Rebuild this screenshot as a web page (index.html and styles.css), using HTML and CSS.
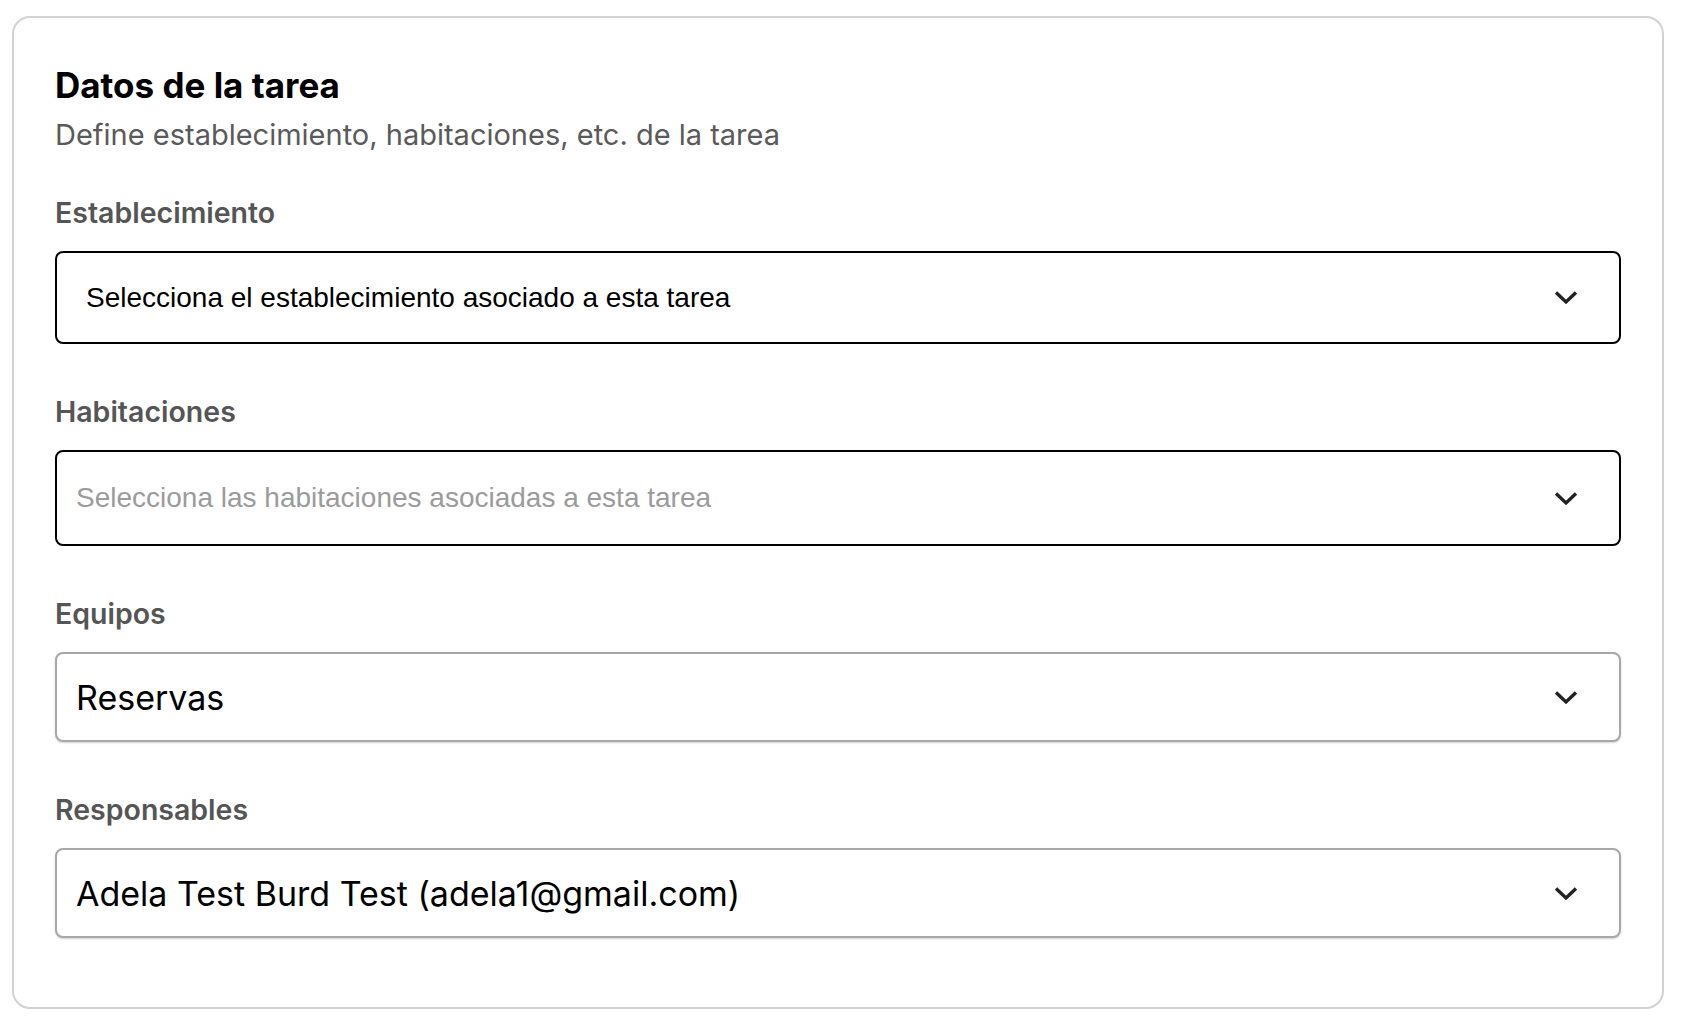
FILE: index.html
```html
<!DOCTYPE html>
<html lang="es">
<head>
<meta charset="utf-8">
<title>Datos de la tarea</title>
<link rel="stylesheet" href="styles.css">
</head>
<body>
<section class="card">
  <h1 class="title">Datos de la tarea</h1>
  <p class="subtitle">Define establecimiento, habitaciones, etc. de la tarea</p>

  <div class="field">
    <div class="label">Establecimiento</div>
    <div class="select select-dark select-est">
      <span class="value-sm">Selecciona el establecimiento asociado a esta tarea</span>
      <svg class="chev" viewBox="0 0 24 15" width="24" height="15"><polyline points="2,2.5 12,12 22,2.5"/></svg>
    </div>
  </div>

  <div class="field">
    <div class="label">Habitaciones</div>
    <div class="select select-dark select-hab">
      <span class="value-sm placeholder">Selecciona las habitaciones asociadas a esta tarea</span>
      <svg class="chev" viewBox="0 0 24 15" width="24" height="15"><polyline points="2,2.5 12,12 22,2.5"/></svg>
    </div>
  </div>

  <div class="field">
    <div class="label">Equipos</div>
    <div class="select select-light">
      <span class="value-lg">Reservas</span>
      <svg class="chev" viewBox="0 0 24 15" width="24" height="15"><polyline points="2,2.5 12,12 22,2.5"/></svg>
    </div>
  </div>

  <div class="field">
    <div class="label">Responsables</div>
    <div class="select select-light">
      <span class="value-lg">Adela Test Burd Test (adela1@gmail.com)</span>
      <svg class="chev" viewBox="0 0 24 15" width="24" height="15"><polyline points="2,2.5 12,12 22,2.5"/></svg>
    </div>
  </div>
</section>
</body>
</html>
```

FILE: styles.css
```css
html, body {
  margin: 0;
  padding: 0;
  background: #ffffff;
}

body {
  padding: 16px 20px 0 12px;
  font-family: Inter, "Noto Sans", "Liberation Sans", sans-serif;
}

.card {
  box-sizing: border-box;
  width: 1652px;
  height: 993px;
  border: 2px solid #d2d2d2;
  border-radius: 18px;
  padding: 46px 41px 0 41px;
  display: flex;
  flex-direction: column;
}

.title {
  margin: 0;
  font-size: 35px;
  line-height: 42px;
  font-weight: 700;
  color: #000000;
}

.subtitle {
  margin: 12px 0 0 0;
  font-size: 29px;
  line-height: 34px;
  font-weight: 400;
  color: #5a5a5a;
}

.field {
  display: flex;
  flex-direction: column;
  gap: 21px;
  margin-top: 51px;
}

.subtitle + .field {
  margin-top: 44px;
}

.label {
  font-size: 28.5px;
  line-height: 34px;
  font-weight: 600;
  color: #555555;
}

.select {
  box-sizing: border-box;
  display: flex;
  align-items: center;
  justify-content: space-between;
  border-radius: 8px;
  background: #ffffff;
  padding-right: 41px;
}

.select-dark {
  border: 2px solid #000000;
}

.select-est {
  height: 93px;
  padding-left: 29px;
}

.select-hab {
  height: 96px;
  padding-left: 19px;
}

.select-light {
  height: 90px;
  border: 2px solid #a8a8a8;
  box-shadow: 0 1px 2px rgba(0, 0, 0, 0.18);
  padding-left: 19px;
}

.value-sm {
  font-family: "Liberation Sans", Arial, sans-serif;
  font-size: 28px;
  color: #000000;
}

.value-sm.placeholder {
  color: #9b9b9b;
}

.value-lg {
  font-family: Inter, "Noto Sans", sans-serif;
  font-size: 34px;
  color: #000000;
}

.chev {
  flex: none;
  fill: none;
  stroke: #222222;
  stroke-width: 3.4;
  stroke-linecap: butt;
  stroke-linejoin: miter;
}
```
